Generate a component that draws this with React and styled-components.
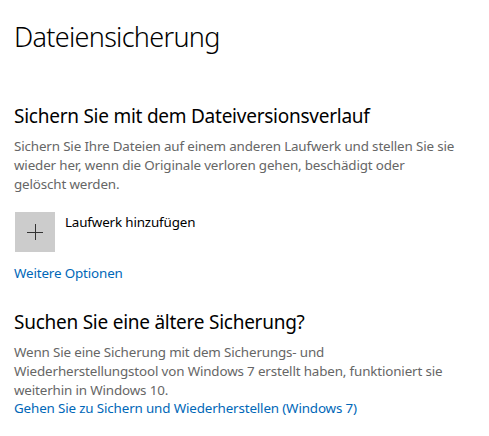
import React from 'react';
import styled, {createGlobalStyle} from 'styled-components';

const GlobalStyle = createGlobalStyle`
  html, body {
    margin: 0;
    padding: 0;
    background: #fff;
  }
  body {
    font-family: "Segoe UI", "Noto Sans", "Open Sans", sans-serif;
    color: #000;
  }
`;

const Page = styled.div`
  padding: 19px 14px 0;
  width: 489px;
  box-sizing: border-box;
`;

const Title = styled.h1`
  margin: 0;
  font-size: 27px;
  font-weight: 300;
  line-height: 36px;
  letter-spacing: -0.7px;
`;

const Section = styled.section`
  margin-top: ${props => props.top || 0}px;
`;

const Heading = styled.h2`
  margin: 0;
  font-size: 19px;
  font-weight: 400;
  line-height: 28px;
  letter-spacing: -0.25px;
`;

const Text = styled.p`
  margin: ${props => props.top || 0}px 0 0;
  font-size: 13.4px;
  line-height: 19px;
  color: #666;
  letter-spacing: -0.15px;
`;

const AddRow = styled.div`
  display: flex;
  align-items: flex-start;
  gap: 10px;
  margin-top: 18px;
  padding-left: 1px;
`;

const AddTile = styled.button`
  width: 40px;
  height: 40px;
  border: none;
  padding: 0;
  background: #cccccc;
  display: flex;
  align-items: center;
  justify-content: center;
`;

const AddLabel = styled.span`
  font-size: 13.4px;
  line-height: 19px;
  margin-top: 1px;
  letter-spacing: -0.15px;
`;

const Link = styled.a`
  display: block;
  font-size: 13.4px;
  line-height: 19px;
  color: #0067b8;
  text-decoration: none;
  letter-spacing: -0.15px;
  margin-top: ${props => props.top || 0}px;
`;

const Plus = () => (
  <svg width="18" height="18" viewBox="0 0 18 18">
    <path d="M9 1v16M1 9h16" stroke="#333" strokeWidth="1" shapeRendering="crispEdges" />
  </svg>
);

export default function App() {
  return (
    <>
      <GlobalStyle />
      <Page>
        <Title>Dateiensicherung</Title>
        <Section top={47}>
          <Heading>Sichern Sie mit dem Dateiversionsverlauf</Heading>
          <Text top={7}>
            Sichern Sie Ihre Dateien auf einem anderen Laufwerk und stellen Sie sie
            <br />
            wieder her, wenn die Originale verloren gehen, beschädigt oder
            <br />
            gelöscht werden.
          </Text>
          <AddRow>
            <AddTile aria-label="Laufwerk hinzufügen">
              <Plus />
            </AddTile>
            <AddLabel>Laufwerk hinzufügen</AddLabel>
          </AddRow>
          <Link href="#" top={12}>Weitere Optionen</Link>
        </Section>
        <Section top={25}>
          <Heading>Suchen Sie eine ältere Sicherung?</Heading>
          <Text top={7}>
            Wenn Sie eine Sicherung mit dem Sicherungs- und
            <br />
            Wiederherstellungstool von Windows 7 erstellt haben, funktioniert sie
            <br />
            weiterhin in Windows 10.
          </Text>
          <Link href="#" top={-1}>Gehen Sie zu Sichern und Wiederherstellen (Windows 7)</Link>
        </Section>
      </Page>
    </>
  );
}
